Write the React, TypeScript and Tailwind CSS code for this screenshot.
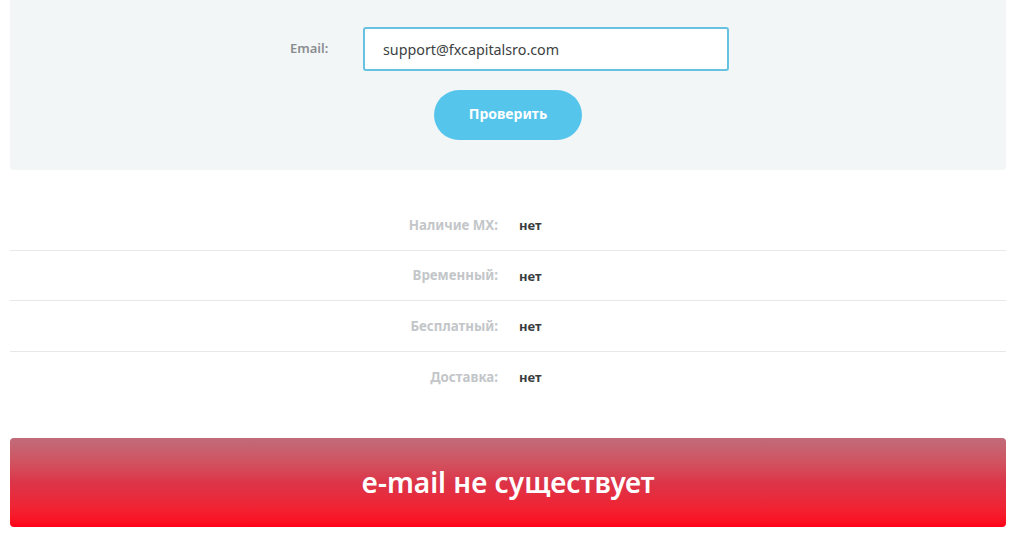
const rows = [
  { label: "Наличие MX:", value: "нет" },
  { label: "Временный:", value: "нет" },
  { label: "Бесплатный:", value: "нет" },
  { label: "Доставка:", value: "нет" },
];

export default function App() {
  return (
    <div className="min-h-[539px] w-[1015px] bg-white pl-[10px] pr-[9px] font-['Noto_Sans',sans-serif]">
      <div className="flex h-[170px] flex-col items-center rounded-b bg-[#f3f6f7] pt-[27px]">
        <div className="ml-[3px] flex items-center">
          <label className="w-[73px] text-[13px] font-semibold text-[#8a8d8f]">
            Email:
          </label>
          <input
            readOnly
            value="support@fxcapitalsro.com"
            className="h-[44px] w-[366px] rounded-[3px] border-2 border-[#66c2e0] bg-white px-[18px] text-[14.3px] text-[#3c3f42] outline-none"
          />
        </div>
        <button className="mt-[19px] h-[50px] w-[148px] rounded-full bg-[#55c5ec] pb-[3px] text-[14px] font-bold text-white">
          Проверить
        </button>
      </div>

      <div className="mt-[30px] flex flex-col">
        {rows.map((row, i) => (
          <div
            key={row.label}
            className={`flex h-[50.5px] items-center pt-[2px] ${
              i < rows.length - 1 ? "border-b border-[#e6e8ea]" : ""
            }`}
          >
            <div className="w-[488px] text-right text-[13.3px] font-bold text-[#c3c6c9]">
              {row.label}
            </div>
            <div className="ml-[21px] text-[13px] font-bold text-[#3a3d40]">
              {row.value}
            </div>
          </div>
        ))}
      </div>

      <div className="mt-[36px] flex h-[89px] items-center justify-center rounded bg-gradient-to-b from-[#c06b7a] via-[#dc3448] to-[#ff0018]">
        <span className="mt-[-2px] text-[28px] font-semibold text-white">
          e-mail не существует
        </span>
      </div>
    </div>
  );
}
